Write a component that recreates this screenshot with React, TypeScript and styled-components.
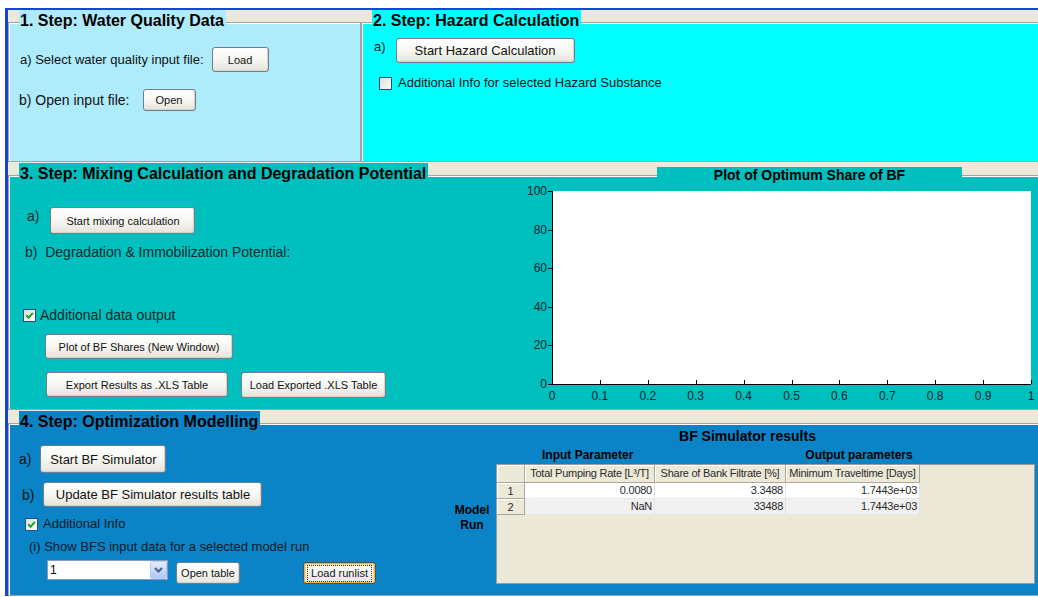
import React from "react";
import styled, { createGlobalStyle, css } from "styled-components";

const FONT = `"Liberation Sans", Arial, sans-serif`;

const PANEL = {
  water: "#aeebfb",
  hazard: "#00ffff",
  mixing: "#00bfbf",
  optim: "#0a84c6",
  face: "#ece9d8",
};

const GlobalStyle = createGlobalStyle`
  html, body { margin: 0; padding: 0; background: #fff; overflow: hidden; }
  body { font-family: ${FONT}; color: #111; }
`;

/* ---------- window & panels ---------- */

const Window = styled.div`
  margin: 8px 0 0 5px;
  width: 1040px;
  border-top: 2px solid #1446d3;
  border-left: 3px solid #1446d3;
  background: ${PANEL.face};
  display: grid;
  grid-template-columns: 353px 1fr;
`;

const Frame = styled.div<{ $top: number; $full?: boolean }>`
  padding-top: ${(p) => p.$top}px;
  grid-column: ${(p) => (p.$full ? "1 / -1" : "auto")};
`;

const Panel = styled.section<{ $bg: string; $h: number }>`
  box-sizing: border-box;
  height: ${(p) => p.$h}px;
  background: ${(p) => p.$bg};
  border: 1px solid #a3a3a3;
  box-shadow: inset 1px 1px 0 #ffffff;
  display: flex;
  flex-direction: column;
`;

const Header = styled.div<{ $cols?: string }>`
  margin-top: -13px;
  height: 20px;
  display: grid;
  grid-template-columns: ${(p) => p.$cols ?? "1fr"};
  align-items: start;
`;

const Legend = styled.h2<{ $bg: string }>`
  justify-self: start;
  margin: 0 0 0 10px;
  padding: 1px 2px 0 1px;
  height: 20px;
  box-sizing: border-box;
  font: bold 16px/19px ${FONT};
  color: #000;
  background: ${(p) => p.$bg};
  white-space: nowrap;
`;

const PlotTitle = styled.div`
  margin: 4px 0 0 137px;
  width: 305px;
  height: 20px;
  background: ${PANEL.mixing};
  font: bold 14px/17px ${FONT};
  color: #000;
  text-align: center;
`;

const Body = styled.div<{ $cols: string }>`
  display: grid;
  grid-template-columns: ${(p) => p.$cols};
  align-items: start;
`;

const Column = styled.div<{ $stretch?: boolean }>`
  display: flex;
  flex-direction: column;
  align-items: ${(p) => (p.$stretch ? "stretch" : "flex-start")};
`;

const Row = styled.div<{ $mt: number; $pl: number; $gap: number; $align?: string }>`
  display: flex;
  align-items: ${(p) => p.$align ?? "center"};
  margin-top: ${(p) => p.$mt}px;
  padding-left: ${(p) => p.$pl}px;
  gap: ${(p) => p.$gap}px;
`;

const Label = styled.span<{ $size: number; $color?: string; $mt?: number }>`
  font: ${(p) => p.$size}px/16px ${FONT};
  color: ${(p) => p.$color ?? "#111"};
  margin-top: ${(p) => p.$mt ?? 0}px;
  white-space: nowrap;
`;

const Note = styled.div<{ $size: number; $mt: number; $pl: number; $color?: string }>`
  font: ${(p) => p.$size}px/16px ${FONT};
  color: ${(p) => p.$color ?? "#111"};
  margin-top: ${(p) => p.$mt}px;
  padding-left: ${(p) => p.$pl}px;
  white-space: pre;
`;

/* ---------- controls ---------- */

const Button = styled.button<{ $w: number; $h: number; $fs?: number; $mt?: number; $ml?: number; $focus?: boolean }>`
  box-sizing: border-box;
  flex-shrink: 0;
  width: ${(p) => p.$w}px;
  height: ${(p) => p.$h}px;
  margin: ${(p) => p.$mt ?? 0}px 0 0 ${(p) => p.$ml ?? 0}px;
  padding: 0;
  font: ${(p) => p.$fs ?? 11}px ${FONT};
  color: #111;
  border: 1px solid #6f7f92;
  border-radius: 3px;
  background: linear-gradient(#ffffff, #f6f5f1 55%, #e4e2da);
  box-shadow: inset -1px -1px 0 #d6d3c8;
  display: flex;
  align-items: center;
  justify-content: center;
  ${(p) =>
    p.$focus &&
    css`
      border-color: #3f556e;
      box-shadow: inset 0 0 0 1px #f1b443, inset 0 0 0 2px #fbd98f;
    `}
`;

const FocusText = styled.span`
  border: 1px dotted #333;
  padding: 1px 3px;
  line-height: 13px;
`;

const CheckBox = styled.span`
  box-sizing: border-box;
  width: 13px;
  height: 13px;
  flex-shrink: 0;
  border: 1px solid #1c5180;
  background: linear-gradient(135deg, #dcdcd7, #ffffff);
  display: flex;
  align-items: center;
  justify-content: center;
`;

function Check({ checked }: { checked?: boolean }) {
  return (
    <CheckBox>
      {checked && (
        <svg width="9" height="9" viewBox="0 0 9 9">
          <path d="M1.2 4.2 L3.6 6.8 L7.8 1.8" stroke="#21a121" strokeWidth="2" fill="none" />
        </svg>
      )}
    </CheckBox>
  );
}

const Select = styled.div`
  box-sizing: border-box;
  width: 121px;
  height: 20px;
  border: 1px solid #7f9db9;
  background: #fff;
  display: flex;
  align-items: center;
`;

const SelectValue = styled.span`
  flex: 1;
  padding-left: 2px;
  font: 12px/16px ${FONT};
  color: #000;
`;

const DropButton = styled.span`
  box-sizing: border-box;
  width: 17px;
  height: 18px;
  border: 1px solid #b9cbf3;
  border-radius: 2px;
  background: linear-gradient(#e6eefc, #c3d5fb 60%, #b2c8f6);
  display: flex;
  align-items: center;
  justify-content: center;
`;

/* ---------- plot ---------- */

const AX = { left: 32, right: 511, top: 8, bottom: 201 };

function SharePlot() {
  const xTicks = Array.from({ length: 11 }, (_, i) => i / 10);
  const yTicks = [0, 20, 40, 60, 80, 100];
  const sx = (v: number) => AX.left + v * (AX.right - AX.left);
  const sy = (v: number) => AX.bottom - (v / 100) * (AX.bottom - AX.top);
  return (
    <svg width={527} height={220} style={{ display: "block" }}>
      <rect x={AX.left} y={AX.top} width={AX.right - AX.left} height={AX.bottom - AX.top} fill="#fff" />
      <line x1={AX.left + 0.5} y1={AX.top} x2={AX.left + 0.5} y2={AX.bottom + 1} stroke="#000" />
      <line x1={AX.left} y1={AX.bottom + 0.5} x2={AX.right} y2={AX.bottom + 0.5} stroke="#000" />
      {yTicks.map((v) => (
        <g key={v}>
          <line x1={AX.left - 4} y1={Math.round(sy(v)) + 0.5} x2={AX.left} y2={Math.round(sy(v)) + 0.5} stroke="#000" />
          <text x={AX.left - 5} y={sy(v) + 4} textAnchor="end" fontSize="12" fontFamily={FONT} fill="#0a2626">
            {v}
          </text>
        </g>
      ))}
      {xTicks.map((v) => (
        <g key={v}>
          <line x1={Math.round(sx(v)) + 0.5} y1={AX.bottom - 4} x2={Math.round(sx(v)) + 0.5} y2={AX.bottom} stroke="#000" />
          <text x={sx(v)} y={AX.bottom + 16} textAnchor="middle" fontSize="12" fontFamily={FONT} fill="#0a2626">
            {v === 0 || v === 1 ? String(v) : v.toFixed(1)}
          </text>
        </g>
      ))}
    </svg>
  );
}

/* ---------- results table ---------- */

const ResultsTitle = styled.div`
  margin-top: -3px;
  font: bold 14px/16px ${FONT};
  color: #000;
  text-align: center;
`;

const GroupHeads = styled.div`
  display: flex;
  gap: 172px;
  margin-top: 4px;
  padding-left: 94px;
  font: bold 12px/14px ${FONT};
  color: #000;
`;

const TableArea = styled.div`
  display: grid;
  grid-template-columns: 48px 539px;
  margin-top: 2px;
`;

const RunLabel = styled.div`
  padding-top: 39px;
  font: bold 12px/15px ${FONT};
  color: #000;
  text-align: center;
`;

const TableBox = styled.div`
  box-sizing: border-box;
  height: 120px;
  border: 1px solid #9c9c9c;
  background: ${PANEL.face};
`;

const Grid = styled.div`
  display: grid;
  grid-template-columns: 28px 130px 131px 134px;
  grid-template-rows: 18px 16px 16px;
  width: max-content;
  font: 11px/15px ${FONT};
  letter-spacing: -0.25px;
  color: #2a2a2a;
`;

const Cell = styled.div<{ $kind: "head" | "data"; $alt?: boolean }>`
  box-sizing: border-box;
  white-space: nowrap;
  overflow: hidden;
  ${(p) =>
    p.$kind === "head"
      ? css`
          background: ${PANEL.face};
          border-right: 1px solid #aca899;
          border-bottom: 1px solid #aca899;
          box-shadow: inset 1px 1px 0 #ffffff;
          text-align: center;
          line-height: 17px;
        `
      : css`
          background: ${p.$alt ? "#f1f1f1" : "#ffffff"};
          border-right: 1px solid #e2e2e2;
          border-bottom: 1px solid #e8e8e8;
          text-align: right;
          padding-right: 2px;
        `}
`;

const COLUMNS = ["Total Pumping Rate [L³/T]", "Share of Bank Filtrate [%]", "Minimum Traveltime [Days]"];
const RUNS = [
  ["0.0080", "3.3488", "1.7443e+03"],
  ["NaN", "33488", "1.7443e+03"],
];

function Results() {
  return (
    <Column $stretch>
      <ResultsTitle>BF Simulator results</ResultsTitle>
      <GroupHeads>
        <span>Input Parameter</span>
        <span>Output parameters</span>
      </GroupHeads>
      <TableArea>
        <RunLabel>
          Model
          <br />
          Run
        </RunLabel>
        <TableBox>
          <Grid>
            <Cell $kind="head" />
            {COLUMNS.map((c) => (
              <Cell key={c} $kind="head">
                {c}
              </Cell>
            ))}
            {RUNS.map((row, i) => (
              <React.Fragment key={i}>
                <Cell $kind="head">{i + 1}</Cell>
                {row.map((v, j) => (
                  <Cell key={j} $kind="data" $alt={i % 2 === 1}>
                    {v}
                  </Cell>
                ))}
              </React.Fragment>
            ))}
          </Grid>
        </TableBox>
      </TableArea>
    </Column>
  );
}

/* ---------- page ---------- */

export default function App() {
  return (
    <>
      <GlobalStyle />
      <Window>
        {/* Step 1 */}
        <Frame $top={12}>
          <Panel $bg={PANEL.water} $h={140}>
            <Header>
              <Legend $bg={PANEL.water}>1. Step: Water Quality Data</Legend>
            </Header>
            <Row $mt={17} $pl={11} $gap={8}>
              <Label $size={13}>a) Select water quality input file:</Label>
              <Button $w={57} $h={25}>Load</Button>
            </Row>
            <Row $mt={17} $pl={10} $gap={13}>
              <Label $size={14}>b) Open input file:</Label>
              <Button $w={53} $h={22}>Open</Button>
            </Row>
          </Panel>
        </Frame>

        {/* Step 2 */}
        <Frame $top={12}>
          <Panel $bg={PANEL.hazard} $h={140}>
            <Header>
              <Legend $bg={PANEL.hazard}>2. Step: Hazard Calculation</Legend>
            </Header>
            <Row $mt={8} $pl={12} $gap={10} $align="flex-start">
              <Label $size={13} $mt={1}>a)</Label>
              <Button $w={179} $h={25} $fs={13}>Start Hazard Calculation</Button>
            </Row>
            <Row $mt={12} $pl={17} $gap={6}>
              <Check />
              <Label $size={13}>Additional Info for selected Hazard Substance</Label>
            </Row>
          </Panel>
        </Frame>

        {/* Step 3 */}
        <Frame $top={13} $full>
          <Panel $bg={PANEL.mixing} $h={235}>
            <Header $cols="511px 1fr">
              <Legend $bg={PANEL.mixing}>3. Step: Mixing Calculation and Degradation Potential</Legend>
              <PlotTitle>Plot of Optimum Share of BF</PlotTitle>
            </Header>
            <Body $cols="511px 1fr">
              <Column>
                <Row $mt={24} $pl={18} $gap={11} $align="flex-start">
                  <Label $size={14} $color="#0c2a2a" $mt={1}>a)</Label>
                  <Button $w={145} $h={27}>Start mixing calculation</Button>
                </Row>
                <Note $size={14} $mt={10} $pl={16} $color="#0c2a2a">
                  {"b)  Degradation & Immobilization Potential:"}
                </Note>
                <Row $mt={47} $pl={14} $gap={4}>
                  <Check checked />
                  <Label $size={14} $color="#0c2a2a">Additional data output</Label>
                </Row>
                <Button $w={188} $h={25} $mt={11} $ml={36}>Plot of BF Shares (New Window)</Button>
                <Row $mt={13} $pl={37} $gap={13} $align="flex-start">
                  <Button $w={182} $h={25}>Export Results as .XLS Table</Button>
                  <Button $w={145} $h={26}>Load Exported .XLS Table</Button>
                </Row>
              </Column>
              <SharePlot />
            </Body>
          </Panel>
        </Frame>

        {/* Step 4 */}
        <Frame $top={13} $full>
          <Panel $bg={PANEL.optim} $h={173}>
            <Header>
              <Legend $bg={PANEL.optim}>4. Step: Optimization Modelling</Legend>
            </Header>
            <Body $cols="439px 1fr">
              <Column>
                <Row $mt={14} $pl={10} $gap={9}>
                  <Label $size={14}>a)</Label>
                  <Button $w={126} $h={28} $fs={13}>Start BF Simulator</Button>
                </Row>
                <Row $mt={9} $pl={13} $gap={9}>
                  <Label $size={14}>b)</Label>
                  <Button $w={219} $h={25} $fs={13}>Update BF Simulator results table</Button>
                </Row>
                <Row $mt={9} $pl={16} $gap={5}>
                  <Check checked />
                  <Label $size={13} $color="#0b1a28">Additional Info</Label>
                </Row>
                <Note $size={13} $mt={7} $pl={20} $color="#0b1a28">
                  (i) Show BFS input data for a selected model run
                </Note>
                <Row $mt={5} $pl={38} $gap={8} $align="flex-start">
                  <Select>
                    <SelectValue>1</SelectValue>
                    <DropButton>
                      <svg width="9" height="6" viewBox="0 0 9 6">
                        <path d="M1 1 L4.5 4.5 L8 1" stroke="#4d6185" strokeWidth="2" fill="none" />
                      </svg>
                    </DropButton>
                  </Select>
                  <Button $w={64} $h={22} $mt={2}>Open table</Button>
                  <Button $w={73} $h={22} $mt={2} $ml={55} $focus>
                    <FocusText>Load runlist</FocusText>
                  </Button>
                </Row>
              </Column>
              <Results />
            </Body>
          </Panel>
        </Frame>
      </Window>
    </>
  );
}
